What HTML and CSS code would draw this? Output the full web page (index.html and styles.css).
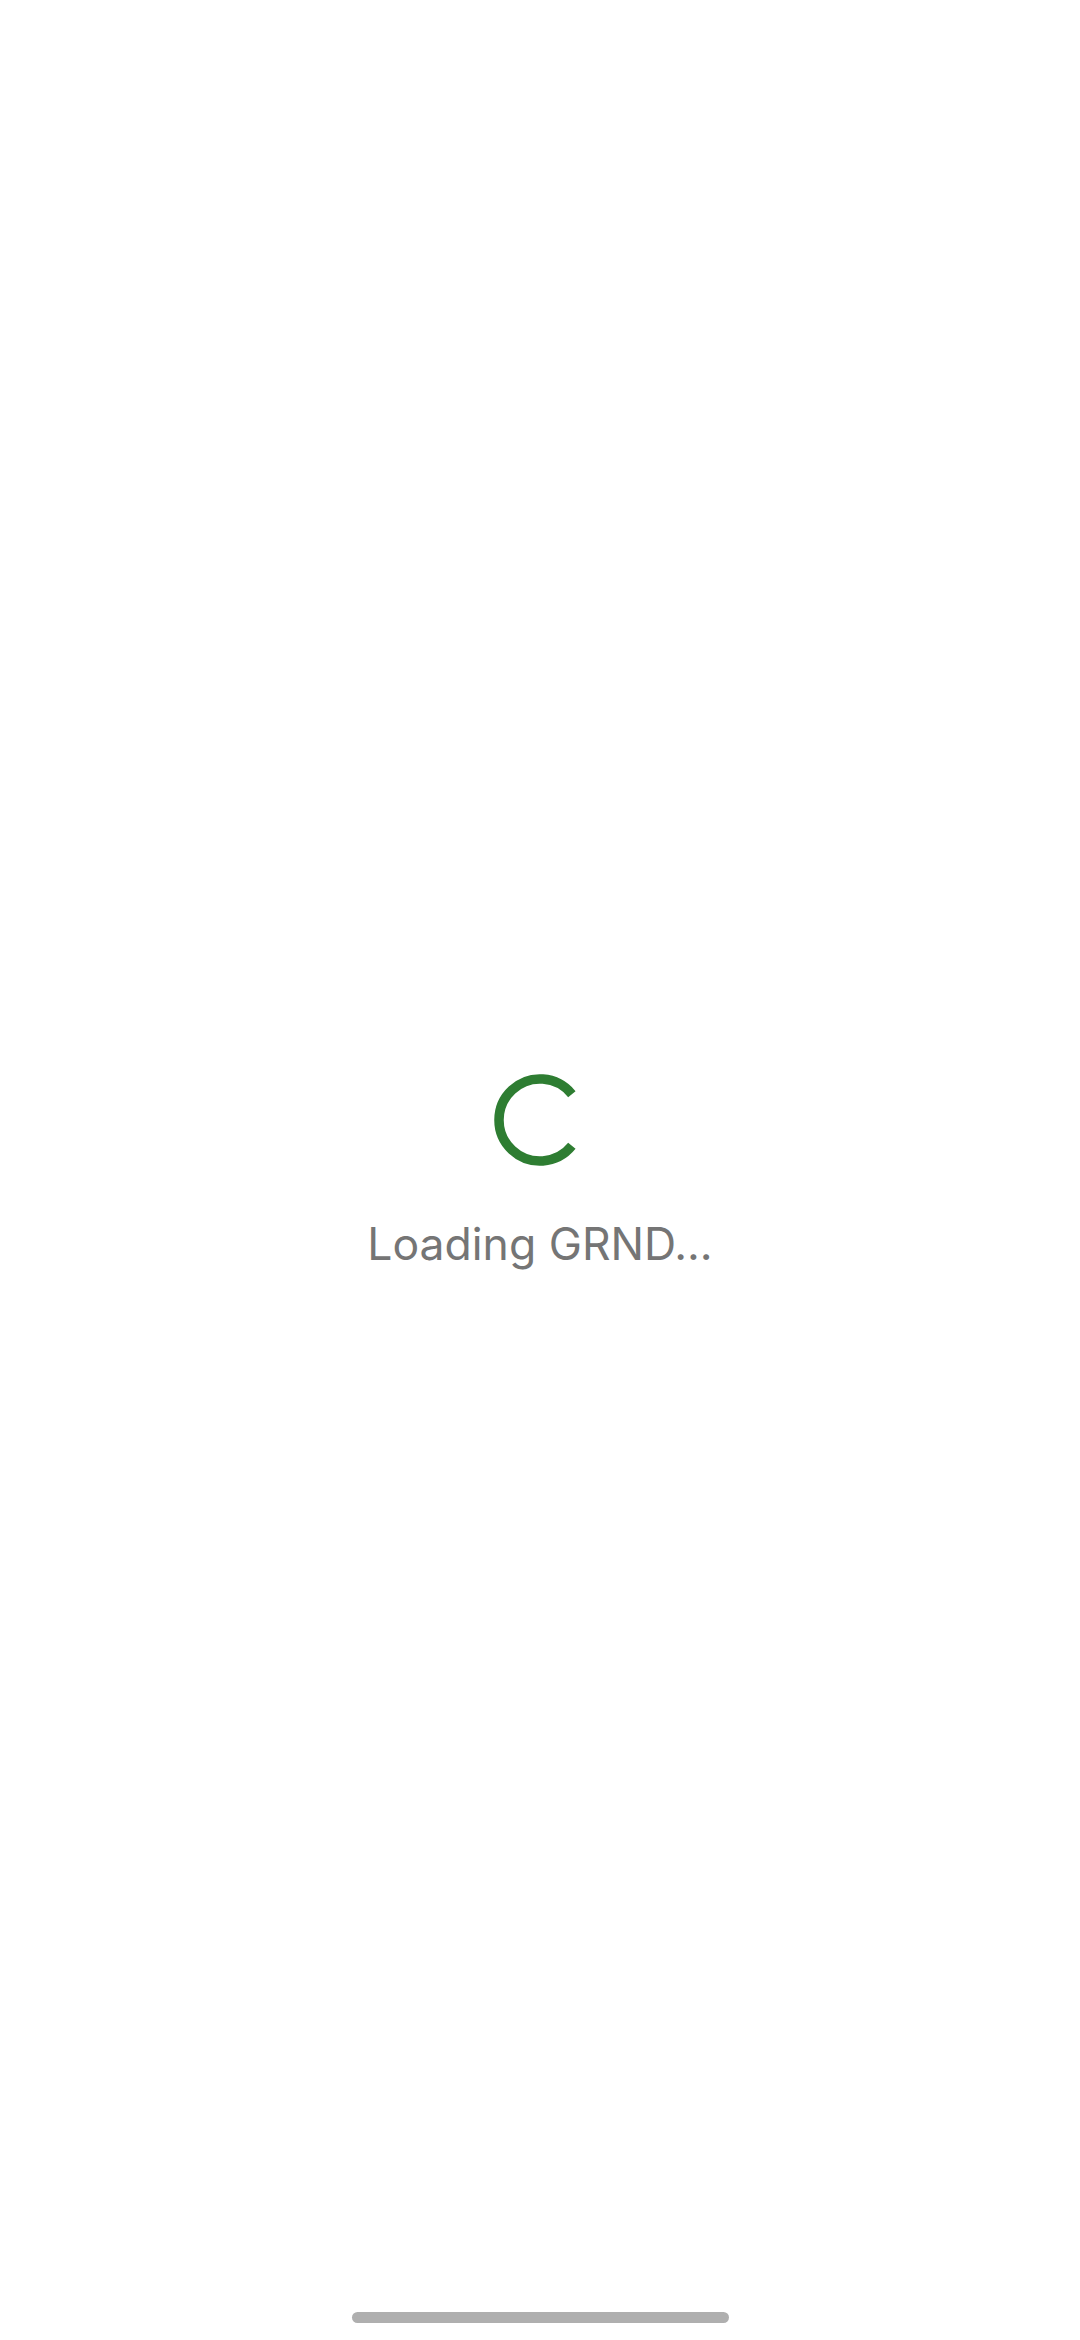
FILE: index.html
```html
<!DOCTYPE html>
<html lang="en">
<head>
<meta charset="utf-8">
<title>Loading GRND</title>
<link rel="stylesheet" href="styles.css">
</head>
<body>
<div class="screen">
  <main class="content">
    <svg class="spinner" viewBox="0 0 92 92" width="92" height="92" aria-hidden="true">
      <path d="M77.86 71.80 A41 41 0 1 1 77.86 20.20" fill="none" stroke="#2E7D32" stroke-width="9.5" stroke-linecap="butt"/>
    </svg>
    <p class="label">Loading GRND...</p>
  </main>
  <div class="gesture-area">
    <div class="gesture-bar"></div>
  </div>
</div>
</body>
</html>
```
FILE: styles.css
```css
html, body {
  margin: 0;
  padding: 0;
  background: #ffffff;
}
.screen {
  width: 1080px;
  height: 2340px;
  display: flex;
  flex-direction: column;
  font-family: Inter, "Noto Sans", sans-serif;
}
.content {
  flex: 1;
  display: flex;
  flex-direction: column;
  align-items: center;
  padding-top: 1074px;
}
.spinner {
  display: block;
}
.label {
  margin: 56px 0 0;
  font-size: 44.5px;
  line-height: 1;
  color: #757575;
  font-weight: 400;
}
.gesture-area {
  display: flex;
  justify-content: center;
  padding-bottom: 17px;
}
.gesture-bar {
  width: 377px;
  height: 11px;
  border-radius: 6px;
  background: #afafaf;
}
```
